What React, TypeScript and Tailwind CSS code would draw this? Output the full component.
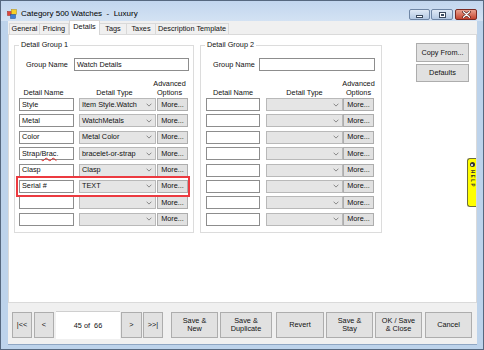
import React from "react";

function AppIcon() {
  return (
    <svg width="10" height="10" viewBox="0 0 10 10" className="shrink-0">
      <rect x="0.5" y="2.5" width="4" height="4" fill="#e0463a" stroke="#9c2a20" strokeWidth="0.5" />
      <rect x="4.5" y="0.5" width="5" height="5" fill="#f6d028" stroke="#b08a10" strokeWidth="0.5" />
      <rect x="3.5" y="5.5" width="5" height="4" fill="#3f7fd6" stroke="#24508f" strokeWidth="0.5" />
    </svg>
  );
}

function Chevron() {
  return (
    <svg width="6" height="4" viewBox="0 0 6 4" className="shrink-0">
      <path d="M0.6 0.7 L3 3.1 L5.4 0.7" fill="none" stroke="#707070" strokeWidth="0.8" />
    </svg>
  );
}

type RowData = { name: string; type: string; squiggle?: boolean; highlight?: boolean };

type Cols = {
  input: string;
  combo: string;
  more: string;
  hName: string;
  hType: string;
  hAdv: string;
  label: string;
  groupInput: string;
};

function WinButton({ className, children }: { className: string; children: React.ReactNode }) {
  return (
    <div
      className={
        "bg-[#e1e1e1] border border-[#adadad] flex items-center justify-center text-center leading-[8px] text-[#111] shrink-0 " +
        className
      }
    >
      {children}
    </div>
  );
}

function DetailGroup({
  title,
  groupName,
  rows,
  cols,
  width,
}: {
  title: string;
  groupName: string;
  rows: RowData[];
  cols: Cols;
  width: string;
}) {
  return (
    <fieldset className={"border border-[#dcdcdc] pb-[6px] shrink-0 " + width}>
      <legend className="ml-[4px] px-[2px] leading-[8px] text-[#111]">{title}</legend>
      <div className="flex items-center mt-[9px] h-[13px]">
        <div className={"leading-[8px] whitespace-nowrap " + cols.label}>Group Name</div>
        <div className={"h-[13px] bg-white border border-[#8d8d8d] flex items-center pl-[2px] " + cols.groupInput}>
          {groupName}
        </div>
      </div>
      <div className="flex items-end mt-[8px] h-[18px] leading-[9px]">
        <div className={"flex justify-center whitespace-nowrap " + cols.hName}>Detail Name</div>
        <div className={"flex justify-center whitespace-nowrap " + cols.hType}>Detail Type</div>
        <div className={"flex flex-col items-center whitespace-nowrap " + cols.hAdv}>
          <span>Advanced</span>
          <span>Options</span>
        </div>
      </div>
      <div className="flex flex-col gap-[3.4px] mt-[1px]">
        {rows.map((r, i) => (
          <div key={i} className="relative flex h-[13px]">
            <div className={"h-[13px] bg-white border border-[#8d8d8d] flex items-center pl-[2px] whitespace-nowrap " + cols.input}>
              {r.squiggle ? (
                <span>
                  Strap/
                  <span className="underline decoration-wavy decoration-[#e02020] decoration-[0.6px] underline-offset-[0.5px]">Brac</span>.
                </span>
              ) : (
                r.name
              )}
            </div>
            <div className={"h-[13px] bg-[#e5e5e5] border border-[#b9b9b9] flex items-center pl-[2px] pr-[3px] whitespace-nowrap " + cols.combo}>
              <span className="flex-1">{r.type}</span>
              <Chevron />
            </div>
            <WinButton className={"h-[13px] " + cols.more}>More...</WinButton>
            {r.highlight && (
              <div className="absolute -top-[4px] left-[1px] w-[174px] h-[21px] border-2 border-[#ec3a40] z-10" />
            )}
          </div>
        ))}
      </div>
    </fieldset>
  );
}

export default function App() {
  const rows1: RowData[] = [
    { name: "Style", type: "Item Style.Watch" },
    { name: "Metal", type: "WatchMetals" },
    { name: "Color", type: "Metal Color" },
    { name: "Strap/Brac.", type: "bracelet-or-strap", squiggle: true },
    { name: "Clasp", type: "Clasp" },
    { name: "Serial #", type: "TEXT", highlight: true },
    { name: "", type: "" },
    { name: "", type: "" },
  ];
  const rows2: RowData[] = Array.from({ length: 8 }, () => ({ name: "", type: "" }));

  const cols1: Cols = {
    input: "ml-[4px] w-[55px]",
    combo: "ml-[5px] w-[77px]",
    more: "ml-[1px] w-[31px]",
    hName: "ml-[1px] w-[55px]",
    hType: "ml-[5px] w-[77px]",
    hAdv: "ml-[1px] w-[31px]",
    label: "ml-[11px] w-[48px]",
    groupInput: "w-[115px]",
  };
  const cols2: Cols = {
    input: "ml-[5px] w-[54px]",
    combo: "ml-[6px] w-[77px]",
    more: "ml-[0px] w-[31px]",
    hName: "ml-[5px] w-[54px]",
    hType: "ml-[6px] w-[77px]",
    hAdv: "ml-[0px] w-[31px]",
    label: "ml-[12px] w-[46px]",
    groupInput: "w-[116px]",
  };

  const tabs = [
    { t: "General", w: "w-[31px]" },
    { t: "Pricing", w: "w-[30px]" },
    { t: "Details", w: "w-[31px]", sel: true },
    { t: "Tags", w: "w-[28px]" },
    { t: "Taxes", w: "w-[30px]" },
    { t: "Description Template", w: "w-[74px]" },
  ];

  return (
    <div className="w-[484px] h-[350px] overflow-hidden bg-[#bdd3eb] border border-[#56687f] flex flex-col font-['Liberation_Sans',Arial,sans-serif] text-[7.3px] leading-[8px] text-[#111]">
      {/* Title bar */}
      <div className="h-[20px] shrink-0 flex items-center pt-[6px] pl-[6px] pr-[6px] bg-gradient-to-b from-[#c2d6ee] to-[#d3e2f3]">
        <AppIcon />
        <span className="ml-[4px] text-[8px] leading-[10px] text-black whitespace-pre">Category 500 Watches  -  Luxury</span>
        <div className="ml-auto flex items-center gap-[1px] self-start mt-[2px]">
          <div className="w-[21px] h-[11px] rounded-[2px] border border-[#6f86a5] bg-gradient-to-b from-[#dfe9f5] to-[#b3c8e2] flex items-center justify-center">
            <div className="w-[7px] h-[3px] mt-[3px] bg-white border border-[#3b4a5e]" />
          </div>
          <div className="w-[22px] h-[11px] rounded-[2px] border border-[#6f86a5] bg-gradient-to-b from-[#dfe9f5] to-[#b3c8e2] flex items-center justify-center">
            <div className="w-[7px] h-[6px] bg-white border border-[#3b4a5e] flex items-center justify-center">
              <div className="w-[3px] h-[2px] bg-[#3b4a5e]" />
            </div>
          </div>
          <div className="ml-[1px] w-[22px] h-[11px] rounded-[2px] border border-[#7a2a22] bg-gradient-to-b from-[#e8a08e] to-[#c4402c] flex items-center justify-center">
            <svg width="9" height="7" viewBox="0 0 9 7">
              <path d="M1.5 0.8 L7.5 6.2 M7.5 0.8 L1.5 6.2" stroke="#4a1a14" strokeWidth="2.6" strokeLinecap="round" />
              <path d="M1.5 0.8 L7.5 6.2 M7.5 0.8 L1.5 6.2" stroke="#ffffff" strokeWidth="1.3" strokeLinecap="round" />
            </svg>
          </div>
        </div>
      </div>

      {/* Frame + client */}
      <div className="flex-1 flex flex-col pl-[7px] pr-[6px] pb-[4px]">
        <div className="flex-1 flex flex-col bg-[#f0f0f0] border-b border-[#8fa6c3]">
          {/* Tab strip */}
          <div className="h-[13px] shrink-0 flex items-end pl-[1px]">
            {tabs.map((tb) =>
              tb.sel ? (
                <div
                  key={tb.t}
                  className={"h-[15px] -mb-[1px] relative z-10 bg-white border border-b-0 border-[#d5d5d5] flex items-start justify-center pt-[2px] text-[#111] " + tb.w}
                >
                  {tb.t}
                </div>
              ) : (
                <div
                  key={tb.t}
                  className={"h-[11px] bg-[#f0f0f0] border border-b-0 border-[#d9d9d9] -ml-px first:ml-0 flex items-center justify-center whitespace-nowrap " + tb.w}
                >
                  {tb.t}
                </div>
              )
            )}
          </div>

          {/* Tab page */}
          <div className="h-[269px] shrink-0 relative bg-white border border-[#dadada] flex items-start pt-[6px] pl-[5px]">
            <DetailGroup title="Detail Group 1" groupName="Watch Details" rows={rows1} cols={cols1} width="w-[180px]" />
            <div className="w-[6px] shrink-0" />
            <DetailGroup title="Detail Group 2" groupName="" rows={rows2} cols={cols2} width="w-[182px]" />
            <div className="ml-[34px] mt-[2px] flex flex-col gap-[2px]">
              <WinButton className="w-[53px] h-[19px]">Copy From...</WinButton>
              <WinButton className="w-[53px] h-[18px]">Defaults</WinButton>
            </div>

            {/* Help tab */}
            <div className="absolute right-0 top-[123px] w-[9px] h-[49px] bg-[#ffff00] border border-r-0 border-[#6e6e3a] rounded-l-[3px] flex flex-col items-center pt-[3px]">
              <div className="w-[5px] h-[5px] rounded-full bg-[#333] flex items-center justify-center">
                <div className="w-[2px] h-[2px] rounded-full bg-white" />
              </div>
              <div className="mt-[3px] [writing-mode:vertical-rl] text-[4.5px] leading-[5px] tracking-[1.5px] font-bold text-[#333]">
                HELP
              </div>
            </div>
          </div>

          {/* Bottom bar */}
          <div className="flex-1 flex items-start pl-[4px] pt-[9px]">
            <WinButton className="w-[20px] h-[26px]">|&lt;&lt;</WinButton>
            <WinButton className="ml-[2px] w-[20px] h-[26px]">&lt;</WinButton>
            <div className="ml-[2px] -mt-[1px] w-[64px] h-[28px] bg-white border-t border-[#cfcfcf] flex items-center justify-center whitespace-pre shrink-0">
              45 of  66
            </div>
            <WinButton className="ml-[1px] w-[21px] h-[26px]">&gt;</WinButton>
            <WinButton className="ml-[1px] w-[20px] h-[26px]">&gt;&gt;|</WinButton>
            <WinButton className="ml-[8px] w-[47px] h-[26px]">
              Save &amp;
              <br />
              New
            </WinButton>
            <WinButton className="ml-[2px] w-[52px] h-[26px]">
              Save &amp;
              <br />
              Duplicate
            </WinButton>
            <WinButton className="ml-[4px] w-[48px] h-[26px]">Revert</WinButton>
            <WinButton className="ml-[2px] w-[47px] h-[26px]">
              Save &amp;
              <br />
              Stay
            </WinButton>
            <WinButton className="ml-[2px] w-[47px] h-[26px]">
              OK / Save
              <br />
              &amp; Close
            </WinButton>
            <WinButton className="ml-[3px] w-[47px] h-[26px]">Cancel</WinButton>
          </div>
        </div>
      </div>
    </div>
  );
}
